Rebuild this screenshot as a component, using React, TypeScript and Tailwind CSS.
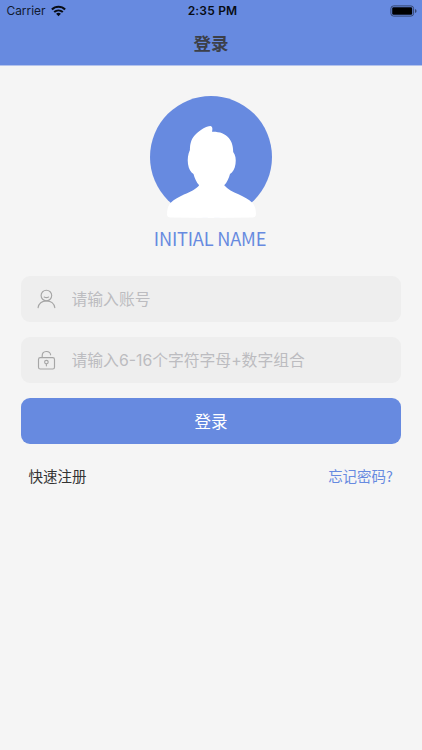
import React, { useState } from "react";

const CJK = "font-['Noto_Sans_CJK_SC',sans-serif]";
const LATIN_CJK = "font-['Inter','Noto_Sans_CJK_SC',sans-serif]";

function WifiIcon() {
  return (
    <svg className="ml-[6px] h-[12px] w-[15px]" viewBox="0 0 15 12" fill="none" stroke="#080c14">
      <path d="M0.9 4.5C4.5 0.8 10.5 0.8 14.1 4.5" strokeWidth="2.1" />
      <path d="M3.2 7.1C5.7 4.8 9.3 4.8 11.8 7.1" strokeWidth="2" />
      <path d="M7.5 11.2 5.1 8.8Q7.5 6.9 9.9 8.8Z" fill="#080c14" stroke="none" />
    </svg>
  );
}

function BatteryIcon() {
  return (
    <svg className="h-[12px] w-[27px]" viewBox="0 0 27 12">
      <rect x="0.9" y="0.9" width="22.7" height="10.2" rx="2.7" fill="none" stroke="#35466f" />
      <rect x="2.2" y="2.2" width="20" height="7.6" rx="1.3" fill="#000" />
      <path d="M25 4.1Q26.6 4.6 26.6 6T25 7.9Z" fill="#35466f" />
    </svg>
  );
}

function Header() {
  return (
    <header className="h-[66px] border-b border-[#b4c3ec] bg-[#678ae0]">
      <div className="grid h-[22px] grid-cols-3 items-center font-['Inter',sans-serif]">
        <div className="flex items-center pl-[6.5px] text-[11.9px] text-[#111a30]">
          Carrier
          <WifiIcon />
        </div>
        <div className="pl-[3px] text-center text-[12px] font-semibold tracking-[0.2px] text-[#080c14]">2:35 PM</div>
        <div className="flex justify-end pr-[5px]">
          <BatteryIcon />
        </div>
      </div>
      <h1 className={`${CJK} text-center text-[17.5px] font-bold leading-[41px] text-[#3c3f48]`}>登录</h1>
    </header>
  );
}

function Avatar() {
  return (
    <svg className="h-[122px] w-[122px]" viewBox="0 0 122 122">
      <circle cx="61" cy="61" r="61" fill="#678ae0" />
      <path
        fill="#fff"
        d="M60.5 30C56 30.2 50 34 46.5 37.5C41.5 42 40 47 39.9 54C38 58 37.3 63 38 68C38.7 73 40.8 76.5 43.5 78C44.5 82 46.5 86.5 49.2 89.3C46 93.5 40 96 34.5 98.3C29 101 24 103.5 21 106.5C18 109.5 17.2 113 17 118Q17 121.5 20.5 121.5L61 122L102.5 121.5Q106 121.5 106 118C105.8 113 105 109.5 102 106.5C99 103.5 94 101 88.5 98.3C83 96 77.5 93.5 74.2 89.3C77 86.5 79 82 80 78C82.7 76.5 84.8 73 85.5 68C86.2 63 85.5 59 83.2 56C83 50 82 46 78.8 42C75 37.5 69.5 35.5 62 35.7C62.8 33 62.5 30.3 60.5 30Z"
      />
    </svg>
  );
}

function UserIcon() {
  return (
    <svg className="h-[20px] w-[20px]" viewBox="0 0 20 20" fill="none" stroke="#a6a6a6" strokeWidth="1.15" strokeLinecap="round">
      <circle cx="10.4" cy="6.5" r="5.3" />
      <path d="M8.2 8Q10.4 9.3 12.6 8M2.1 18.6C2.6 14.8 5.8 11.8 10.4 11.8S18.2 14.8 18.8 18.6" />
    </svg>
  );
}

function LockIcon() {
  return (
    <svg className="h-[20px] w-[20px]" viewBox="0 0 20 20" fill="none" stroke="#a6a6a6" strokeWidth="1.15" strokeLinecap="round">
      <rect x="2.5" y="7.6" width="16" height="11.4" rx="1.8" />
      <path d="M6.2 7.4V5.8C6.2 0.2 14 0.2 14.6 4.8" />
      <circle cx="10.4" cy="12.1" r="1.8" />
      <path d="M10.4 14V15.8" />
    </svg>
  );
}

type FieldProps = {
  icon: React.ReactNode;
  placeholder: string;
  type: string;
  value: string;
  onChange: (value: string) => void;
};

function Field({ icon, placeholder, type, value, onChange }: FieldProps) {
  return (
    <label className="flex h-[46px] items-center rounded-[9px] bg-[#eee] pl-[15px]">
      {icon}
      <input
        className={`${LATIN_CJK} ml-[15.5px] mt-[2px] min-w-0 flex-1 bg-transparent text-[15.8px] text-[#333] outline-none placeholder:text-[#bcbcc0]`}
        type={type}
        placeholder={placeholder}
        value={value}
        onChange={(e) => onChange(e.target.value)}
      />
    </label>
  );
}

export default function App() {
  const [account, setAccount] = useState("");
  const [password, setPassword] = useState("");

  return (
    <div className="min-h-screen bg-[#f5f5f5]">
      <Header />
      <main className="flex flex-col px-[21px] pt-[30px]">
        <div className="flex flex-col items-center">
          <Avatar />
          <p className={`${CJK} mt-[5px] h-[30px] pr-[2px] text-[18.2px] leading-[30px] tracking-[-0.2px] text-[#678ae0]`}>INITIAL NAME</p>
        </div>
        <div className="mt-[23px] flex flex-col gap-[15px]">
          <Field icon={<UserIcon />} placeholder="请输入账号" type="text" value={account} onChange={setAccount} />
          <Field icon={<LockIcon />} placeholder="请输入6-16个字符字母+数字组合" type="password" value={password} onChange={setPassword} />
          <button className={`${CJK} h-[46px] rounded-[9px] bg-[#678ae0] text-[16.5px] text-white`}>登录</button>
        </div>
        <div className={`${CJK} mt-[21px] flex justify-between pl-[7.5px] pr-[8px] text-[14.5px] leading-[22px]`}>
          <a className="text-[#333]">快速注册</a>
          <a className="text-[#678ae0]">忘记密码?</a>
        </div>
      </main>
    </div>
  );
}
